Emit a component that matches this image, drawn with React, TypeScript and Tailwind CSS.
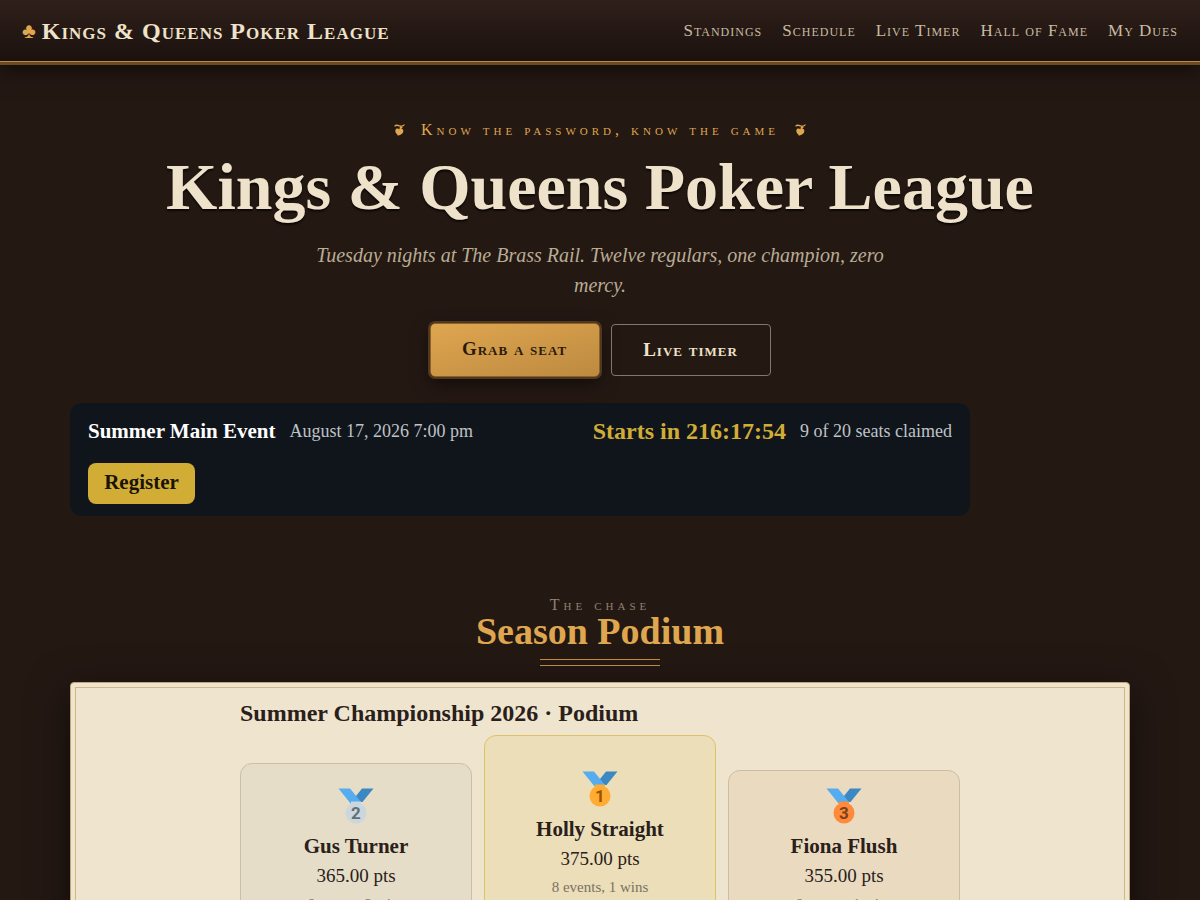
import React from "react";

const navLinks = ["Standings", "Schedule", "Live Timer", "Hall of Fame", "My Dues"];

interface PodiumEntry {
    place: number;
    name: string;
    points: string;
    record: string;
    card: string;
    disc: string;
    digit: string;
}

const podium: PodiumEntry[] = [
    {
        place: 2,
        name: "Gus Turner",
        points: "365.00",
        record: "8 events, 2 wins",
        card: "border-[#cbbfa9] bg-[#e5ddc8] pt-[17px] pb-4",
        disc: "#ccd6dd",
        digit: "#627077",
    },
    {
        place: 1,
        name: "Holly Straight",
        points: "375.00",
        record: "8 events, 1 wins",
        card: "border-[#dfc268] bg-[#ebdeb9] pt-7 pb-[33px]",
        disc: "#ffac33",
        digit: "#9e5200",
    },
    {
        place: 3,
        name: "Fiona Flush",
        points: "355.00",
        record: "8 events, 1 wins",
        card: "border-[#cdbda4] bg-[#e9dac0] pt-2.5 pb-4",
        disc: "#ff8a3b",
        digit: "#7c4119",
    },
];

function Medal({ place, disc, digit }: { place: number; disc: string; digit: string }) {
    return (
        <svg viewBox="0 0 36 36" className="h-9 w-9" aria-hidden="true">
            <path d="M18 8 24 .5h11.5L24.500 14h-8z" fill="#3b88c3" />
            <path d="M.5.5H12L23 14l-1 2h-9z" fill="#55acee" />
            <path d="M13 13.500h10v4H13z" fill={disc} />
            <circle cx="18" cy="25" r="10.500" fill={disc} />
            <text
                x="18"
                y="31"
                textAnchor="middle"
                fontSize="17"
                fontWeight="700"
                fontFamily="Roboto, sans-serif"
                fill={digit}
            >
                {place}
            </text>
        </svg>
    );
}

function Fleuron() {
    return (
        <svg viewBox="0 0 11 12" className="h-3 w-[11px]" fill="currentColor" aria-hidden="true">
            <path d="M.3 1.600C2-.2 3.800.6 5.500 1.300 7.300 2 8.800 1.500 10.200.2l.6.6C9.500 2.700 7.300 3.300 5.300 2.500 3.600 1.800 2.300 1.500.8 2.700z" />
            <path d="M6 2.200 9 3 7.200 4.600C9.700 5 10 8 8.300 9.600 7 11 5.200 11.200 3.700 11.900 4 11.200 3.600 10.800 3 10.200 1 8.700.8 5.500 2.600 4.600 3.800 4.100 4.700 4.700 5.300 5.400z" />
        </svg>
    );
}

function PodiumCard({ entry }: { entry: PodiumEntry }) {
    return (
        <li className={`flex flex-1 flex-col items-center rounded-xl border px-4 text-center ${entry.card}`}>
            <div className="flex h-[50px] items-center">
                <Medal place={entry.place} disc={entry.disc} digit={entry.digit} />
            </div>
            <h4 className="text-[21px] leading-[30px] font-bold">{entry.name}</h4>
            <p className="text-[19px] leading-[30px]">{entry.points} pts</p>
            <p className="text-[15px] leading-[26px] text-[#7a7161]">{entry.record}</p>
        </li>
    );
}

function SiteHeader() {
    return (
        <header className="relative border-b-3 border-[#6b4a23] bg-linear-to-b from-[#30201b] to-[#1a110d] shadow-[0_6px_20px_rgba(0,0,0,0.5)]">
            <div className="flex h-[62px] items-center justify-between border-b border-[#c08a3e] px-[22px]">
                <a href="#" className="flex items-center gap-1.5 text-2xl leading-8 font-bold tracking-[1px] text-[#efe2ca] [font-variant-caps:small-caps]">
                    <span className="text-[21px] tracking-normal text-[#dfa650]">♣</span>
                    Kings &amp; Queens Poker League
                </a>
                <nav className="flex gap-5">
                    {navLinks.map((label) => (
                        <a key={label} href="#" className="text-[17px] leading-7 tracking-[1px] text-[#c9bba2] [font-variant-caps:small-caps]">
                            {label}
                        </a>
                    ))}
                </nav>
            </div>
        </header>
    );
}

function Hero() {
    return (
        <section className="flex flex-col items-center pt-[53px] text-center">
            <p className="flex items-center gap-4 text-base leading-6 tracking-[4px] text-[#dfa650] [font-variant-caps:small-caps]">
                <Fleuron />
                Know the password, know the game
                <Fleuron />
            </p>
            <h1 className="mt-2.5 text-[66px] leading-[70px] font-bold text-[#efe2ca] [text-shadow:0_2px_2px_rgba(0,0,0,0.7)]">
                Kings &amp; Queens Poker League
            </h1>
            <p className="mt-[18px] max-w-[600px] text-xl leading-[30px] text-[#b9ac94] italic">
                Tuesday nights at The Brass Rail. Twelve regulars, one champion, zero mercy.
            </p>
            <div className="mt-[23px] flex items-center gap-[11px]">
                <button
                    type="button"
                    className="h-[54px] w-[170px] rounded-[5px] border border-[#8b6128] bg-linear-165 from-[#dfa650] to-[#bd8a40] pb-0.5 text-[19px] font-bold tracking-[1px] text-[#2a1a0c] shadow-[0_0_0_2px_#4e3820,0_6px_18px_rgba(0,0,0,0.55)] [font-variant-caps:small-caps]"
                >
                    Grab a seat
                </button>
                <button
                    type="button"
                    className="h-[52px] w-40 rounded-sm border border-[#857767] text-[19px] font-bold tracking-[1px] text-[#efe2ca] [font-variant-caps:small-caps]"
                >
                    Live timer
                </button>
            </div>
        </section>
    );
}

function NextEvent() {
    return (
        <section className="mt-[26px] max-w-[900px] rounded-xl bg-[#10151b] px-[18px] py-3 text-lg text-[#bfc2c6]">
            <div className="flex flex-wrap items-center gap-x-3.5 leading-8">
                <h2 className="text-[21px] leading-8 font-bold text-white">Summer Main Event</h2>
                <time dateTime="2026-08-17T19:00">August 17, 2026 7:00 pm</time>
                <strong className="ml-auto text-2xl leading-8 text-[#d2ad36]">Starts in 216:17:54</strong>
                <span>9 of 20 seats claimed</span>
            </div>
            <button type="button" className="mt-4 block h-[41px] w-[107px] rounded-lg bg-[#d2ad36] pb-0.5 text-[21px] font-bold text-[#1a1408]">
                Register
            </button>
        </section>
    );
}

function SeasonPodium() {
    return (
        <section className="mt-[77px] pb-16">
            <div className="flex flex-col items-center text-center">
                <p className="text-base leading-6 tracking-[4px] text-[#8f8270] [font-variant-caps:small-caps]">The chase</p>
                <h2 className="text-[38px] leading-7 font-bold text-[#dfa650]">Season Podium</h2>
                <div className="mt-3.5 h-[7px] w-[120px] border-y border-[#c08a3e]" />
            </div>
            <div className="mt-4 rounded-sm border border-[#bfa57b] bg-[#efe5cf] p-1 text-[#2a201a] shadow-[0_10px_40px_rgba(0,0,0,0.55)]">
                <div className="border border-[#cfb58c] px-4 pt-[9px] pb-10">
                    <div className="mx-auto max-w-[720px]">
                        <h3 className="text-2xl leading-8 font-bold">Summer Championship 2026 · Podium</h3>
                        <ol className="mt-1.5 flex items-end gap-3">
                            {podium.map((entry) => (
                                <PodiumCard key={entry.place} entry={entry} />
                            ))}
                        </ol>
                    </div>
                </div>
            </div>
        </section>
    );
}

export default function App() {
    return (
        <div className="min-h-screen bg-[#241813] font-['Liberation_Serif',serif]">
            <SiteHeader />
            <main className="mx-auto max-w-[1100px] px-5">
                <Hero />
                <NextEvent />
                <SeasonPodium />
            </main>
        </div>
    );
}
